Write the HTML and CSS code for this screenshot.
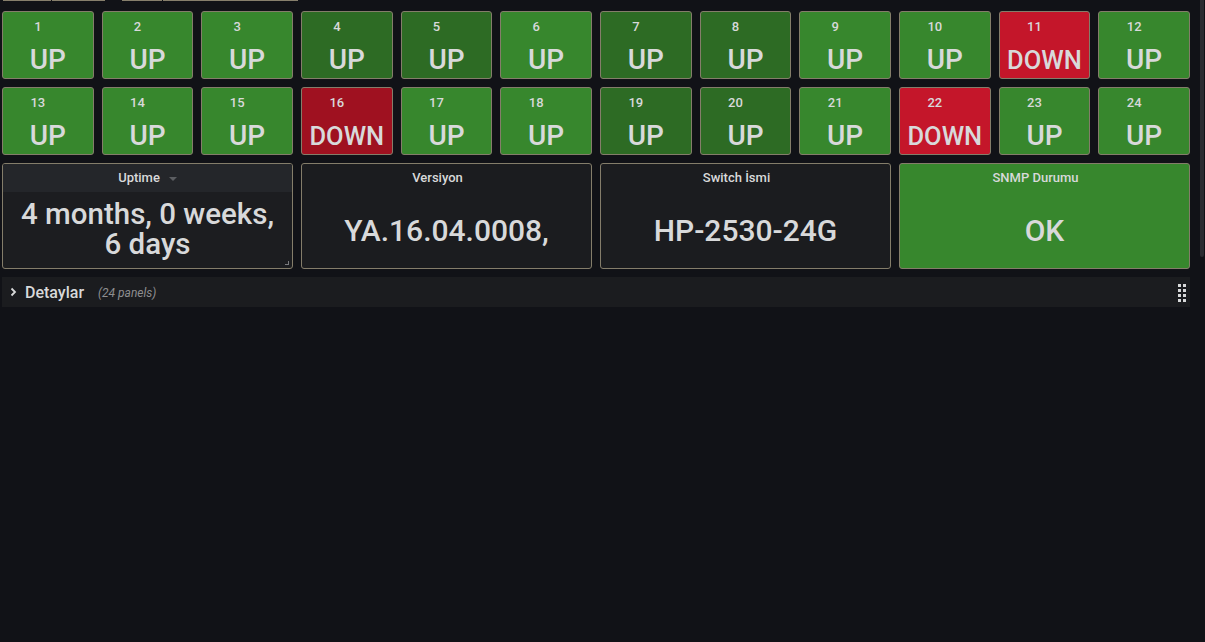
FILE: index.html
```html
<!DOCTYPE html>
<html lang="tr">
<head>
<meta charset="utf-8">
<title>Switch Dashboard</title>
<link rel="stylesheet" href="styles.css">
</head>
<body>
<div class="vars">
  <div class="var v1"><span></span><span></span></div>
  <div class="var v2"><span></span><span></span></div>
</div>
<div class="dash">
  <div class="tiles">
    <div class="tile up"><div class="tile-title">1</div><div class="tile-value">UP</div></div>
    <div class="tile up"><div class="tile-title">2</div><div class="tile-value">UP</div></div>
    <div class="tile up"><div class="tile-title">3</div><div class="tile-value">UP</div></div>
    <div class="tile up-dim"><div class="tile-title">4</div><div class="tile-value">UP</div></div>
    <div class="tile up-dim"><div class="tile-title">5</div><div class="tile-value">UP</div></div>
    <div class="tile up"><div class="tile-title">6</div><div class="tile-value">UP</div></div>
    <div class="tile up-dim"><div class="tile-title">7</div><div class="tile-value">UP</div></div>
    <div class="tile up-dim"><div class="tile-title">8</div><div class="tile-value">UP</div></div>
    <div class="tile up"><div class="tile-title">9</div><div class="tile-value">UP</div></div>
    <div class="tile up"><div class="tile-title">10</div><div class="tile-value">UP</div></div>
    <div class="tile down"><div class="tile-title">11</div><div class="tile-value small">DOWN</div></div>
    <div class="tile up"><div class="tile-title">12</div><div class="tile-value">UP</div></div>
    <div class="tile up"><div class="tile-title">13</div><div class="tile-value">UP</div></div>
    <div class="tile up"><div class="tile-title">14</div><div class="tile-value">UP</div></div>
    <div class="tile up"><div class="tile-title">15</div><div class="tile-value">UP</div></div>
    <div class="tile down-dim"><div class="tile-title">16</div><div class="tile-value small">DOWN</div></div>
    <div class="tile up"><div class="tile-title">17</div><div class="tile-value">UP</div></div>
    <div class="tile up"><div class="tile-title">18</div><div class="tile-value">UP</div></div>
    <div class="tile up-dim"><div class="tile-title">19</div><div class="tile-value">UP</div></div>
    <div class="tile up-dim"><div class="tile-title">20</div><div class="tile-value">UP</div></div>
    <div class="tile up"><div class="tile-title">21</div><div class="tile-value">UP</div></div>
    <div class="tile down"><div class="tile-title">22</div><div class="tile-value small">DOWN</div></div>
    <div class="tile up"><div class="tile-title">23</div><div class="tile-value">UP</div></div>
    <div class="tile up"><div class="tile-title">24</div><div class="tile-value">UP</div></div>
  </div>

  <div class="panels">
    <div class="panel hovered">
      <div class="panel-title plain">Uptime<span class="caret"></span></div>
      <div class="panel-value multi"><span class="line">4 months, 0 weeks,</span><span class="line">6 days</span></div>
      <span class="resize"></span>
    </div>
    <div class="panel">
      <div class="panel-title">Versiyon</div>
      <div class="panel-value">YA.16.04.0008,</div>
    </div>
    <div class="panel">
      <div class="panel-title">Switch İsmi</div>
      <div class="panel-value">HP-2530-24G</div>
    </div>
    <div class="panel ok">
      <div class="panel-title">SNMP Durumu</div>
      <div class="panel-value">OK</div>
    </div>
  </div>

  <div class="row">
    <svg class="chevron" width="7" height="10" viewBox="0 0 7 10"><path d="M1.5 1.5 L5 5 L1.5 8.5" fill="none" stroke="#d8d9da" stroke-width="1.8"/></svg>
    <span class="row-title">Detaylar</span>
    <span class="row-count">(24 panels)</span>
    <span class="handle">
      <i></i><i></i><i></i><i></i><i></i><i></i><i></i><i></i>
    </span>
  </div>
</div>
<div class="scrollbar"></div>
</body>
</html>
```

FILE: styles.css
```css
* { box-sizing: border-box; }
html, body { margin: 0; padding: 0; }
body {
  background: #111217;
  font-family: Roboto, "Liberation Sans", sans-serif;
  color: #d8d9da;
  width: 1205px;
  height: 642px;
  overflow: hidden;
  position: relative;
}

.vars { display: flex; height: 11px; padding-left: 3px; }
.var { display: flex; gap: 1px; height: 1px; }
.var span { height: 1px; background: #877f6c; }
.v1 { width: 102px; }
.v1 span:first-child { width: 48px; }
.v1 span:last-child { flex: 1; }
.v2 { width: 176px; margin-left: 17px; }
.v2 span:first-child { width: 40px; }
.v2 span:last-child { flex: 1; }

.dash {
  margin-left: 2px;
  width: 1188px;
  display: flex;
  flex-direction: column;
  gap: 8px;
}

.tiles {
  display: grid;
  grid-template-columns: repeat(12, 1fr);
  grid-auto-rows: 68px;
  gap: 8px;
}
.tile {
  border: 1px solid #847d6a;
  border-radius: 3px;
  display: flex;
  flex-direction: column;
}
.tile.up { background: #37872d; }
.tile.up-dim { background: #2d6b24; }
.tile.down { background: #c4162a; }
.tile.down-dim { background: #9f1120; }
.tile-title {
  height: 29px;
  line-height: 29px;
  font-size: 13px;
  font-weight: 500;
  text-align: center;
  padding-right: 20px;
}
.tile-value {
  flex: 1;
  display: flex;
  align-items: center;
  justify-content: center;
  font-size: 28px;
  font-weight: 500;
  line-height: 1;
}
.tile-value.small { font-size: 25.5px; padding-top: 2px; }

.panels {
  display: grid;
  grid-template-columns: repeat(4, 1fr);
  grid-auto-rows: 106px;
  gap: 8px;
}
.panel {
  border: 1px solid #847d6a;
  border-radius: 3px;
  background: #1b1c1f;
  display: flex;
  flex-direction: column;
  position: relative;
  overflow: hidden;
}
.panel.ok { background: #37872d; }
.panel.hovered { background: #1c1d20; }
.panel.hovered .panel-title { background: #24262a; }
.panel-title {
  height: 28px;
  line-height: 28px;
  font-size: 13px;
  font-weight: 500;
  text-align: center;
  padding-right: 18px;
  display: flex;
  justify-content: center;
  align-items: center;
}
.panel-title.plain { padding-right: 0; }
.caret {
  width: 0;
  height: 0;
  border-left: 4px solid transparent;
  border-right: 4px solid transparent;
  border-top: 4px solid #5c5e62;
  margin-left: 9px;
  margin-top: 1px;
}
.panel-value {
  flex: 1;
  display: flex;
  align-items: center;
  justify-content: center;
  text-align: center;
  font-size: 30px;
  font-weight: 500;
  line-height: 31px;
}
.panel-value.multi {
  flex-direction: column;
  font-size: 29.5px;
  padding-bottom: 2px;
}
.line { display: block; height: 30px; line-height: 30px; }
.resize {
  position: absolute;
  right: 3px;
  bottom: 3px;
  width: 4px;
  height: 4px;
  border-right: 1px solid #7a7b7e;
  border-bottom: 1px solid #7a7b7e;
}

.row {
  height: 30px;
  background: #1b1c1f;
  display: flex;
  align-items: center;
  padding-left: 8px;
  padding-right: 4px;
}
.chevron { display: block; margin-right: 8px; }
.row-title { font-size: 16px; font-weight: 500; }
.row-count {
  font-size: 12px;
  font-style: italic;
  color: #8e8e90;
  margin-left: 14px;
  padding-top: 1px;
}
.handle {
  margin-left: auto;
  display: grid;
  grid-template-columns: 3px 3px;
  grid-auto-rows: 3px;
  column-gap: 2px;
  row-gap: 2px;
  margin-top: 2px;
}
.handle i { display: block; background: #d8d9da; }

.scrollbar {
  position: absolute;
  right: 1px;
  top: 0;
  width: 4px;
  height: 257px;
  background: #2b2d32;
  border-radius: 0 0 3px 3px;
}
```
